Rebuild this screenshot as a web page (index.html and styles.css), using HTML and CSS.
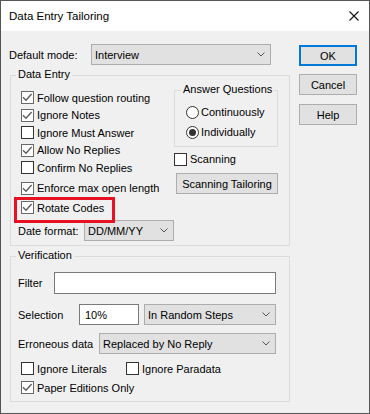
FILE: index.html
```html
<!DOCTYPE html>
<html lang="en">
<head>
    <meta charset="UTF-8">
    <title>Data Entry Tailoring</title>
    <link rel="stylesheet" href="styles.css">
</head>
<body>
    <div class="window">
        <div class="titlebar">
            <span class="title">Data Entry Tailoring</span>
            <svg class="close" width="10" height="10" viewBox="0 0 10 10">
                <path d="M0.5 0.5L9.5 9.5M9.5 0.5L0.5 9.5" stroke="#111" stroke-width="1.1" fill="none"/>
            </svg>
        </div>

        <div class="client">
            <div class="main">
                <div class="mode-row">
                    <span class="mode-label">Default mode:</span>
                    <div class="select mode-select">
                        <span>Interview</span>
                        <svg class="chevron" width="8" height="5" viewBox="0 0 8 5"><path d="M0.5 0.5L4 4L7.5 0.5" stroke="#555" fill="none"/></svg>
                    </div>
                </div>

                <!-- Data Entry -->
                <div class="group entry-group">
                    <span class="group-title">Data Entry</span>
                    <div class="entry-body">
                        <div class="entry-left">
                            <div class="check-row"><span class="box checked"><svg width="11" height="11" viewBox="0 0 11 11"><path d="M1 5.2L4 8.2L9.6 2" stroke="#5a5a5a" stroke-width="1.3" fill="none"/></svg></span>Follow question routing</div>
                            <div class="check-row"><span class="box checked"><svg width="11" height="11" viewBox="0 0 11 11"><path d="M1 5.2L4 8.2L9.6 2" stroke="#5a5a5a" stroke-width="1.3" fill="none"/></svg></span>Ignore Notes</div>
                            <div class="check-row"><span class="box"></span>Ignore Must Answer</div>
                            <div class="check-row"><span class="box checked"><svg width="11" height="11" viewBox="0 0 11 11"><path d="M1 5.2L4 8.2L9.6 2" stroke="#5a5a5a" stroke-width="1.3" fill="none"/></svg></span>Allow No Replies</div>
                            <div class="check-row"><span class="box"></span>Confirm No Replies</div>
                            <div class="check-row enforce-row"><span class="box checked"><svg width="11" height="11" viewBox="0 0 11 11"><path d="M1 5.2L4 8.2L9.6 2" stroke="#5a5a5a" stroke-width="1.3" fill="none"/></svg></span>Enforce max open length</div>
                            <div class="check-row rotate-row"><span class="box checked"><svg width="11" height="11" viewBox="0 0 11 11"><path d="M1 5.2L4 8.2L9.6 2" stroke="#5a5a5a" stroke-width="1.3" fill="none"/></svg></span>Rotate Codes</div>
                            <div class="date-row">
                                <span class="date-label">Date format:</span>
                                <div class="select date-select">
                                    <span>DD/MM/YY</span>
                                    <svg class="chevron" width="8" height="5" viewBox="0 0 8 5"><path d="M0.5 0.5L4 4L7.5 0.5" stroke="#555" fill="none"/></svg>
                                </div>
                            </div>
                        </div>

                        <div class="entry-right">
                            <div class="group answer-group">
                                <span class="group-title">Answer Questions</span>
                                <div class="radio-row first"><span class="radio"></span>Continuously</div>
                                <div class="radio-row"><span class="radio on"></span>Individually</div>
                            </div>
                            <div class="check-row scan-row"><span class="box"></span>Scanning</div>
                            <button class="btn scan-btn">Scanning Tailoring</button>
                        </div>
                    </div>
                </div>

                <!-- Verification -->
                <div class="group verify-group">
                    <span class="group-title">Verification</span>
                    <div class="verify-body">
                        <div class="form-row filter-row">
                            <span class="filter-label">Filter</span>
                            <div class="input filter-input"></div>
                        </div>
                        <div class="form-row selection-row">
                            <span class="selection-label">Selection</span>
                            <div class="input selection-input">10%</div>
                            <div class="select steps-select">
                                <span>In Random Steps</span>
                                <svg class="chevron" width="8" height="5" viewBox="0 0 8 5"><path d="M0.5 0.5L4 4L7.5 0.5" stroke="#555" fill="none"/></svg>
                            </div>
                        </div>
                        <div class="form-row error-row">
                            <span class="error-label">Erroneous data</span>
                            <div class="select error-select">
                                <span>Replaced by No Reply</span>
                                <svg class="chevron" width="8" height="5" viewBox="0 0 8 5"><path d="M0.5 0.5L4 4L7.5 0.5" stroke="#555" fill="none"/></svg>
                            </div>
                        </div>
                        <div class="verify-checks first-checks">
                            <div class="check-row literals"><span class="box"></span>Ignore Literals</div>
                            <div class="check-row"><span class="box"></span>Ignore Paradata</div>
                        </div>
                        <div class="verify-checks">
                            <div class="check-row"><span class="box checked"><svg width="11" height="11" viewBox="0 0 11 11"><path d="M1 5.2L4 8.2L9.6 2" stroke="#5a5a5a" stroke-width="1.3" fill="none"/></svg></span>Paper Editions Only</div>
                        </div>
                    </div>
                </div>
            </div>

            <div class="side">
                <button class="btn default-btn">OK</button>
                <button class="btn cancel-btn">Cancel</button>
                <button class="btn help-btn">Help</button>
            </div>
        </div>
    </div>
</body>
</html>
```

FILE: styles.css
```css
body {
    margin: 0;
    background-color: #fff;
    font-family: "Liberation Sans", Arial, sans-serif;
    font-size: 11px;
    color: #000;
}

.window {
    width: 370px;
    height: 414px;
    box-sizing: border-box;
    border: 1px solid #555;
    background-color: #f0f0f0;
    display: flex;
    flex-direction: column;
}

.titlebar {
    height: 30px;
    background-color: #fff;
    display: flex;
    align-items: center;
    justify-content: space-between;
    padding: 0 10px 0 8px;
}

.title {
    font-size: 11.5px;
}

.client {
    display: flex;
    padding: 13px 0 0 8px;
}

.main {
    width: 281px;
}

.side {
    margin: 1px 0 0 9px;
    display: flex;
    flex-direction: column;
}

/* controls */

.select {
    box-sizing: border-box;
    height: 21px;
    background-color: #e1e1e1;
    border: 1px solid #adadad;
    display: flex;
    align-items: center;
    justify-content: space-between;
    padding: 0 5px 0 3px;
}

.chevron {
    display: block;
}

.input {
    box-sizing: border-box;
    height: 21px;
    background-color: #fff;
    border: 1px solid #7a7a7a;
    display: flex;
    align-items: center;
    padding-left: 5px;
}

.btn {
    box-sizing: border-box;
    height: 21px;
    margin: 0;
    padding: 0;
    font-family: inherit;
    font-size: 11px;
    color: #000;
    background-color: #e1e1e1;
    border: 1px solid #adadad;
}

.default-btn {
    width: 58px;
    border: 2px solid #0078d7;
}

.cancel-btn {
    width: 58px;
    margin-top: 8px;
}

.help-btn {
    width: 58px;
    margin-top: 9px;
}

.check-row {
    height: 17.5px;
    display: flex;
    align-items: center;
}

.box {
    box-sizing: border-box;
    width: 13px;
    height: 13px;
    margin-right: 3px;
    border: 1px solid #333;
    background-color: #fff;
    flex-shrink: 0;
}

.box.checked {
    border-color: #6a6a6a;
}

.box svg {
    display: block;
}

.radio-row {
    height: 20px;
    display: flex;
    align-items: center;
    padding-left: 11px;
}

.radio-row.first {
    margin-top: 5px;
}

.radio {
    box-sizing: border-box;
    width: 13px;
    height: 13px;
    margin-right: 2px;
    border: 1px solid #333;
    border-radius: 50%;
    background-color: #fff;
    display: flex;
    align-items: center;
    justify-content: center;
}

.radio.on::before {
    content: "";
    width: 7px;
    height: 7px;
    border-radius: 50%;
    background-color: #333;
}

/* group boxes */

.group {
    box-sizing: border-box;
    margin-left: 1px;
    border: 1px solid #dcdcdc;
}

.group-title {
    display: table;
    margin: -9px 0 0 5px;
    padding: 0 2px;
    line-height: 15px;
    background-color: #f0f0f0;
}

.mode-row {
    display: flex;
    align-items: center;
}

.mode-label {
    width: 82px;
}

.mode-select {
    width: 180px;
}

.entry-group {
    width: 280px;
    height: 171px;
    margin-top: 10px;
}

.entry-body {
    display: flex;
    padding: 7px 0 0 10px;
}

.entry-left {
    width: 153px;
}

.enforce-row {
    margin-top: 3px;
}

/* red highlight drawn over the row */
.rotate-row {
    position: relative;
    margin-top: 2px;
    width: 88px;
}

.rotate-row::after {
    content: "";
    position: absolute;
    left: -7px;
    top: -2px;
    right: -6px;
    bottom: -6px;
    border: 3px solid #e81123;
}

.date-row {
    display: flex;
    align-items: center;
    margin: 3.5px 0 0 -3px;
}

.date-label {
    width: 66px;
}

.date-select {
    width: 90px;
}

.entry-right {
    width: 104px;
}

.answer-group {
    width: 104px;
    height: 57px;
    margin: 1px 0 0 0;
}

.answer-group .group-title {
    margin-left: 6px;
}

.scan-row {
    height: 16px;
    margin-top: 4px;
}

.scan-btn {
    width: 102px;
    margin: 6px 0 0 2px;
}

.verify-group {
    width: 280px;
    height: 146px;
    margin-top: 10px;
}

.verify-body {
    padding: 9px 0 0 7px;
}

.form-row {
    display: flex;
    align-items: center;
}

.filter-label {
    width: 36px;
}

.filter-input {
    width: 222px;
    height: 22px;
}

.selection-row {
    margin-top: 10px;
}

.selection-label {
    width: 61px;
}

.selection-input {
    width: 60px;
}

.steps-select {
    width: 132px;
    margin-left: 5px;
}

.error-row {
    margin-top: 8px;
}

.error-label {
    width: 81px;
}

.error-select {
    width: 177px;
}

.verify-checks {
    display: flex;
    margin-left: 3px;
}

.verify-checks .check-row {
    height: 19px;
}

.first-checks {
    margin-top: 5px;
}

.literals {
    width: 105px;
}
```
